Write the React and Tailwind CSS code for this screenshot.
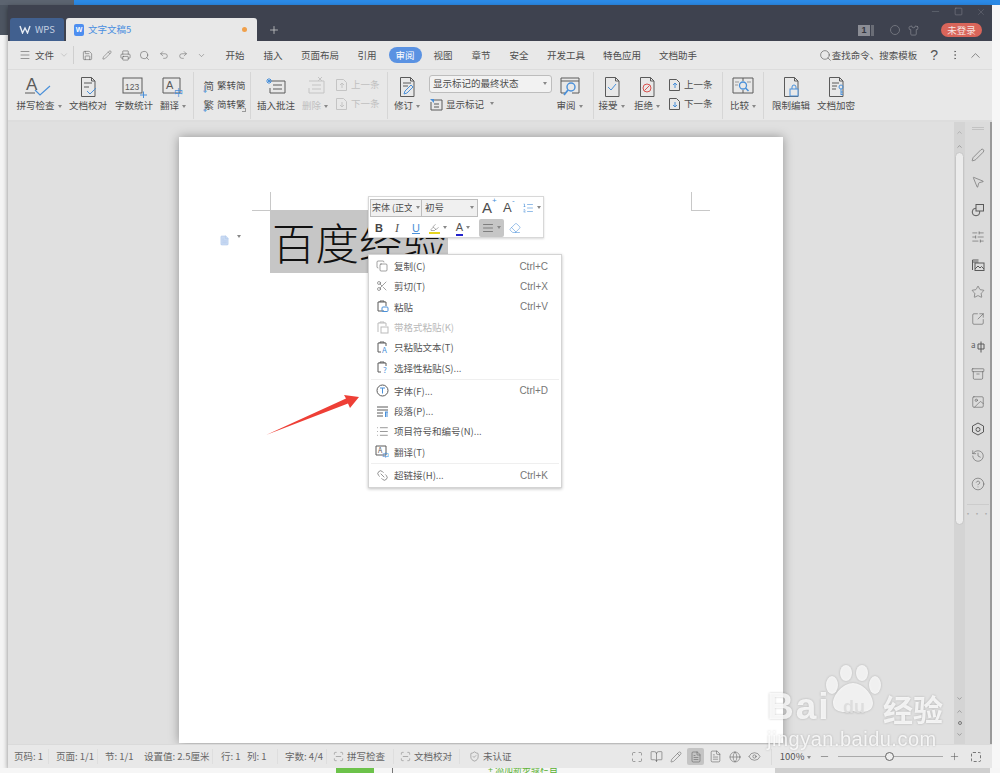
import {
  Menu, ChevronDown, ChevronUp, Save, Printer, Undo2, Redo2, Search, EllipsisVertical, CircleHelp,
  Plus, Minus, X, Square, Shirt, Copy, Scissors, Link2, Star, Pen, MousePointer2, SlidersHorizontal,
  SquareArrowOutUpRight, Archive, Image, History, Pencil, Eye, Globe, BookOpen, ShieldCheck, Maximize, FileText,
  AlignJustify, Eraser, Highlighter, ListOrdered, ScanLine, List,
} from "lucide-react";

const G = "#5a5a5a";
const B = "#4a90d9";

// small caret used by most ribbon items
const Caret = () => <span className="inline-block ml-[3px] mb-[1px] border-x-[2px] border-t-[3px] border-x-transparent border-t-[#888]"></span>;

const DocIcon = ({ children, size = 22, color = G }) => (
  <svg width={size} height={size} viewBox="0 0 22 22" fill="none" stroke={color} strokeWidth="1">
    <path d="M4.5 1.5h10l3.500 3.500v15.500h-13.500z" />
    <path d="M14.500 1.500v3.500h3.500" />
    {children}
  </svg>
);

const CommentIcon = ({ color = G, star }) => (
  <svg width="24" height="22" viewBox="0 0 24 22" fill="none" stroke={color} strokeWidth="1">
    <path d="M6 5h15v12h-15v-5" />
    <path d="M9 9h9M9 13h9" />
    {star && <path d="M5 2v6M2 5h6M3 3l4 4M7 3l-4 4" stroke={B} />}
    {!star && <path d="M15 1l4 4M19 1l-4 4" />}
  </svg>
);

const ribbonIcons = {
  spell: (
    <svg width="30" height="22" viewBox="0 0 30 22" fill="none">
      <text x="2" y="14" fontSize="17" fill={G} fontFamily="Liberation Sans">A</text>
      <path d="M1 17h10" stroke={G} />
      <path d="M11 14l5 5 10-9" stroke={B} strokeWidth="1.200" />
    </svg>
  ),
  proof: <DocIcon><path d="M7 7h8M7 11h5" /><path d="M10 15l3 3 6-6" stroke={B} /></DocIcon>,
  count: (
    <svg width="30" height="22" viewBox="0 0 30 22" fill="none">
      <rect x="4" y="2" width="19" height="15" stroke={G} />
      <text x="6" y="13.500" fontSize="8.500" fill={G} fontFamily="Liberation Sans">123</text>
      <path d="M21 19h7M24.500 15.500v7" stroke={B} />
    </svg>
  ),
  translate: (
    <svg width="28" height="22" viewBox="0 0 28 22" fill="none">
      <path d="M4 2h17v15h-17z" stroke={G} />
      <text x="7" y="13" fontSize="11" fill={G} fontFamily="Liberation Sans">A</text>
      <text x="15" y="20" fontSize="9" fill={B} fontFamily="Noto Sans CJK SC">中</text>
    </svg>
  ),
  comment: <CommentIcon star />,
  del: <CommentIcon color="#c4c4c4" />,
  revise: <DocIcon><path d="M7 7h8M7 10h5" /><path d="M8 18l1-3 6-6 2 2-6 6z" stroke={B} /></DocIcon>,
  review: (
    <svg width="24" height="22" viewBox="0 0 24 22" fill="none">
      <path d="M3 2h18v15h-7M8 17h-5v-15M3 5h18" stroke={G} />
      <circle cx="13" cy="11" r="4" stroke={B} strokeWidth="1.400" />
      <path d="M10 14l-4 5" stroke={B} strokeWidth="1.800" />
    </svg>
  ),
  accept: <DocIcon><path d="M7 11l3 3 5-6" stroke={B} /></DocIcon>,
  reject: <DocIcon><circle cx="11" cy="12" r="4" stroke="#d9534f" /><path d="M8.500 14.500l5-5" stroke="#d9534f" /></DocIcon>,
  compare: (
    <svg width="26" height="22" viewBox="0 0 26 22" fill="none">
      <path d="M3 2h20v15h-20zM13 2v3M13 14v3" stroke={G} />
      <path d="M5 6h4M5 9h3M17 6h4" stroke="#999" />
      <circle cx="13" cy="9.500" r="3.500" stroke={B} strokeWidth="1.300" />
      <path d="M15.500 12l3 3" stroke={B} strokeWidth="1.600" />
    </svg>
  ),
  lock: <DocIcon><rect x="10" y="13" width="8" height="7" fill="#e9e9e9" stroke={B} /><path d="M12 13v-2a2 2 0 0 1 4 0v2" stroke={B} /></DocIcon>,
  key: <DocIcon><path d="M7 7h7M7 10h5M7 13h4" /><circle cx="16" cy="11" r="2" stroke={B} /><path d="M16 13v6M16 16h2M16 18.500h2" stroke={B} /></DocIcon>,
};

const SmallDoc = ({ color = G, up }) => (
  <svg width="13" height="14" viewBox="0 0 13 14" fill="none" stroke={color}>
    <path d="M1.500 1.500h7l3 3v8h-10z" />
    {up ? <path d="M7 10v-5M5 7l2-2 2 2" stroke={color === G ? B : color} /> : <path d="M7 5v5M5 8l2 2 2-2" stroke={color === G ? B : color} />}
  </svg>
);

function Big({ icon, label, caret, w, dim }) {
  return (
    <div className="flex flex-col items-center pt-[5px] shrink-0" style={{ width: w }}>
      <div className="h-[24px] flex items-center justify-center">{ribbonIcons[icon]}</div>
      <div className={`-mt-[1px] text-[9.500px] leading-[14px] whitespace-nowrap ${dim ? "text-[#c0c0c0]" : "text-[#4d4d4d]"}`}>
        {label}{caret && <Caret />}
      </div>
    </div>
  );
}

function Small({ icon, label, dim, caret }) {
  return (
    <div className={`h-[19px] flex items-center gap-[3px] text-[9.500px] whitespace-nowrap ${dim ? "text-[#c0c0c0]" : "text-[#4d4d4d]"}`}>
      {icon}<span>{label}</span>{caret && <Caret />}
    </div>
  );
}

const ConvertIcon = ({ ch }) => (
  <span className="w-[13px] h-[14px] relative text-[10.500px] leading-[14px] text-[#555] text-right">
    {ch}
    <span className="absolute left-0 bottom-0 text-[8px] leading-[8px] text-[#4a90d9]">↓</span>
  </span>
);

const Sep = () => <div className="w-px h-[47px] bg-[#d6d6d6] shrink-0"></div>;

const menus = ["开始", "插入", "页面布局", "引用", "审阅", "视图", "章节", "安全", "开发工具", "特色应用", "文档助手"];

const menuItems = [
  { icon: <Copy size={12} strokeWidth={1.100} />, label: "复制(C)", key: "Ctrl+C" },
  { icon: <Scissors size={12} strokeWidth={1.100} />, label: "剪切(T)", key: "Ctrl+X" },
  { icon: <svg width="13" height="13" viewBox="0 0 13 13" fill="none" stroke={G}><path d="M8 11h-6v-9h8v4" /><path d="M4 2v-1h4v1" /><rect x="6" y="7" width="6" height="4.500" rx="1" stroke={B} /></svg>, label: "粘贴", key: "Ctrl+V" },
  { icon: <svg width="13" height="13" viewBox="0 0 13 13" fill="none" stroke="#bbb"><path d="M2 11v-9h8v3M4 2v-1h4v1" /><rect x="5" y="6" width="7" height="6" /></svg>, label: "带格式粘贴(K)", dim: true },
  { icon: <svg width="13" height="13" viewBox="0 0 13 13" fill="none" stroke={G}><path d="M5 11h-3v-9h8v3M4 2v-1h4v1" /><text x="6" y="12" fontSize="8" fill={B} stroke="none">A</text></svg>, label: "只粘贴文本(T)" },
  { icon: <svg width="13" height="13" viewBox="0 0 13 13" fill="none" stroke={G}><path d="M5 11h-3v-9h8v3M4 2v-1h4v1" /><text x="7" y="12" fontSize="8" fill={B} stroke="none">?</text></svg>, label: "选择性粘贴(S)...", sepAfter: true },
  { icon: <svg width="13" height="13" viewBox="0 0 13 13" fill="none" stroke={G}><circle cx="6.500" cy="6.500" r="5.500" /><path d="M4 4h5M6.500 4v5.500" stroke={B} /></svg>, label: "字体(F)...", key: "Ctrl+D" },
  { icon: <svg width="13" height="13" viewBox="0 0 13 13" fill="none" stroke={G}><path d="M1 2h11M1 5h11M1 8h6M1 11h6" /><path d="M9.500 7v5M11 7v5M9 7h3" stroke={B} /></svg>, label: "段落(P)..." },
  { icon: <List size={13} strokeWidth={1.100} />, label: "项目符号和编号(N)..." },
  { icon: <svg width="14" height="13" viewBox="0 0 14 13" fill="none" stroke={G}><path d="M1 1h10v9h-10z" /><text x="3" y="8" fontSize="7" fill={G} stroke="none">A</text><text x="7" y="13" fontSize="7" fill={B} stroke="none">中</text></svg>, label: "翻译(T)", sepAfter: true },
  { icon: <Link2 size={13} strokeWidth={1.100} className="rotate-45" />, label: "超链接(H)...", key: "Ctrl+K" },
];

const sideIcons = [Pen, MousePointer2, null, SlidersHorizontal, null, Star, SquareArrowOutUpRight, null, Archive, Image, null, History, CircleHelp];
const sideExtras = {
  2: <svg width="14" height="14" viewBox="0 0 14 14" fill="none" stroke={G}><circle cx="5" cy="9" r="3.800" /><rect x="5" y="1.500" width="7.500" height="6.500" fill="#d8d8d8" /></svg>,
  4: <svg width="14" height="14" viewBox="0 0 14 14" fill="none" stroke={G}><path d="M1.500 12v-10h6M1.500 4h6" /><rect x="4" y="5" width="9" height="7.500" /><path d="M4 11l3-3 2 2 1.500-1.500 2.500 2.500" /></svg>,
  7: <svg width="14" height="14" viewBox="0 0 14 14" fill="none" stroke={G}><text x="0" y="8" fontSize="8" fill={G} stroke="none">a</text><path d="M7 4h6v5h-6zM10 1.500v11" /></svg>,
  10: <svg width="14" height="14" viewBox="0 0 14 14" fill="none" stroke={G}><path d="M7 1l5.500 3v6l-5.500 3-5.500-3v-6z" /><circle cx="7" cy="7.500" r="2" /></svg>,
};

const quick = [
  <Save size={11} strokeWidth={1.100} />,
  <Pencil size={10} strokeWidth={1.100} />,
  <Printer size={11} strokeWidth={1.100} />,
  <Search size={11} strokeWidth={1.100} />,
  <Undo2 size={10} strokeWidth={1.100} />,
  <Redo2 size={10} strokeWidth={1.100} />,
  <ChevronDown size={9} strokeWidth={1.100} />,
];

const viewIcons = [
  <Maximize size={12} strokeWidth={1} />,
  <BookOpen size={13} strokeWidth={1} />,
  <Pencil size={12} strokeWidth={1} />,
  <span className="w-[17px] h-[17px] rounded-[2px] bg-[#c4c4c4] flex items-center justify-center"><FileText size={12} strokeWidth={1} /></span>,
  <FileText size={13} strokeWidth={1} />,
  <Globe size={12} strokeWidth={1} />,
  <Eye size={13} strokeWidth={1} />,
];

export default function App() {
  return (
    <div className="w-[1000px] h-[773px] overflow-hidden bg-white flex flex-col font-['Noto_Sans_CJK_SC','Liberation_Sans',sans-serif] text-[#4d4d4d] relative">
      {/* desktop behind the window */}
      <div className="h-[5px] shrink-0 flex">
        <div className="w-[74px] bg-[#5c6470]"></div>
        <div className="flex-1 bg-[#2b8ae6]"></div>
      </div>

      <div className="flex flex-1 min-h-0">
        <div className="w-[8px] shrink-0 flex flex-col">
          <div className="h-[30px] bg-[#4d5561]"></div>
          <div className="flex-1 bg-[#f4f4f4]"></div>
        </div>

        {/* wps window */}
        <div className="w-[984px] h-[763px] flex flex-col shrink-0 shadow-[0_2px_5px_rgba(0,0,0,0.45)]">
          {/* title bar */}
          <div className="h-[36px] shrink-0 bg-[#3e424f] flex items-end relative">
            <div className="ml-[2px] w-[54px] h-[23px] rounded-t-[3px] bg-[#41608f] flex items-center justify-center gap-[4px] text-[9.500px] text-[#c4d0e2]">
              <svg width="12" height="9" viewBox="0 0 12 9" fill="none" stroke="#e6ecf4" strokeWidth="1.400"><path d="M1 1l2.500 7 2.500-5 2.500 5 2.500-7" /></svg>
              WPS
            </div>
            <div className="ml-[2px] w-[191px] h-[23px] rounded-t-[3px] bg-[#e8e8e8] flex items-center pl-[8px] text-[9.500px] text-[#4a8fe0]">
              <span className="w-[10px] h-[12px] rounded-[2px] bg-[#4d8ef0] text-white text-[7px] leading-[12px] text-center font-bold font-['Liberation_Sans',sans-serif] mr-[4px]">W</span>
              文字文稿5
              <span className="ml-auto mr-[10px] w-[5px] h-[5px] rounded-full bg-[#f0a04b]"></span>
            </div>
            <Plus size={12} color="#d0d0d0" strokeWidth={1.500} className="ml-[11px] mb-[5px]" />
            <div className="ml-auto flex items-center mb-[4px] mr-[10px]">
              <span className="w-[12px] h-[11px] bg-[#8b8d95] text-[#33363f] text-[9px] leading-[11px] text-center font-bold font-['Liberation_Sans',sans-serif]">1</span>
              <span className="ml-[1px] w-[3px] h-[11px] bg-[#6a6d76]"></span>
              <span className="ml-[16px] w-[10px] h-[10px] rounded-full border border-[#70737c]"></span>
              <Shirt size={11} color="#9a9ca4" strokeWidth={1.200} className="ml-[8px]" />
              <span className="ml-[22px] w-[41px] h-[14px] rounded-full bg-[#d9655a] text-[9.500px] leading-[14px] text-center text-[#f7e5e2]">未登录</span>
            </div>
            <div className="absolute right-[6px] top-[1px] flex items-center gap-[13px]">
              <Minus size={11} color="#7c7f88" strokeWidth={1} />
              <Square size={9} color="#a0a2aa" strokeWidth={1} />
              <X size={10} color="#7c7f88" strokeWidth={1} />
            </div>
          </div>

          {/* menu bar */}
          <div className="h-[29px] shrink-0 bg-[#e8e8e8] border-b border-[#dcdcdc] flex items-center text-[9.500px]">
            <Menu size={12} strokeWidth={1.100} className="ml-[11px]" />
            <span className="ml-[4px]">文件</span>
            <ChevronDown size={10} color="#999" strokeWidth={1} className="ml-[5px]" />
            <div className="ml-[4px] w-px h-[18px] bg-[#cfcfcf]"></div>
            <div className="flex items-center ml-[4px] w-[138px]">
              {quick.map((q, i) => (
                <span key={i} className="w-[19px] flex justify-center">{q}</span>
              ))}
            </div>
            <div className="flex items-center">
              {menus.map((m) => (
                <div key={m} className={`h-[16px] flex justify-center ${m.length > 2 ? "w-[56px]" : "w-[38px]"}`}>
                  <span className={`h-[16px] leading-[16px] ${m === "审阅" ? "px-[7px] bg-[#5a92e2] text-white rounded-full" : ""}`}>{m}</span>
                </div>
              ))}
            </div>
            <div className="ml-auto flex items-center">
              <Search size={13} strokeWidth={1.100} />
              <span>查找命令、搜索模板</span>
              <span className="ml-[13px] text-[14px] text-[#555] font-['Liberation_Sans',sans-serif]">?</span>
              <EllipsisVertical size={12} strokeWidth={1.100} className="ml-[11px]" />
              <ChevronUp size={15} strokeWidth={1} className="ml-[7px] mr-[9px]" />
            </div>
          </div>

          {/* ribbon */}
          <div className="h-[52px] shrink-0 bg-[#e8e8e8] border-b-2 border-[#dddddd] flex items-center">
            <div className="flex w-[185px] pl-[7px] h-full shrink-0">
              <Big icon="spell" label="拼写检查" caret w={48} />
              <Big icon="proof" label="文档校对" w={50} />
              <Big icon="count" label="字数统计" w={42} />
              <Big icon="translate" label="翻译" caret w={36} />
            </div>
            <Sep />
            <div className="w-[56px] shrink-0 flex flex-col justify-center pl-[7px] relative">
              <Small icon={<ConvertIcon ch="简" />} label="繁转简" />
              <Small icon={<ConvertIcon ch="繁" />} label="简转繁" />
              <span className="absolute right-[4px] bottom-[2px] w-[4px] h-[4px] border-r border-b border-[#999]"></span>
            </div>
            <Sep />
            <div className="w-[136px] shrink-0 flex h-full pl-[3px]">
              <Big icon="comment" label="插入批注" w={44} />
              <Big icon="del" label="删除" caret dim w={34} />
              <div className="flex flex-col justify-center ml-[3px] -mt-[2px]">
                <Small icon={<SmallDoc color="#c4c4c4" up />} label="上一条" dim />
                <Small icon={<SmallDoc color="#c4c4c4" />} label="下一条" dim />
              </div>
            </div>
            <Sep />
            <div className="w-[205px] shrink-0 flex h-full pl-[4px]">
              <Big icon="revise" label="修订" caret w={30} />
              <div className="ml-[7px] w-[123px] flex flex-col justify-center gap-[2px] -mt-[2px]">
                <div className="h-[18px] rounded-[3px] border border-[#bdbdbd] bg-[#f2f2f2] flex items-center justify-between pl-[3px] pr-[4px] text-[9.500px]">显示标记的最终状态<Caret /></div>
                <Small icon={<svg width="14" height="13" viewBox="0 0 14 13" fill="none" stroke={G}><path d="M2 4v8h11v-10h-9M5 6h5M5 9h5" /><path d="M1 1h4v4z" fill={B} stroke="none" /></svg>} label="显示标记" caret />
              </div>
              <Big icon="review" label="审阅" caret w={35} />
            </div>
            <Sep />
            <div className="w-[128px] shrink-0 flex h-full">
              <Big icon="accept" label="接受" caret w={35} />
              <Big icon="reject" label="拒绝" caret w={36} />
              <div className="flex flex-col justify-center ml-[3px] -mt-[2px]">
                <Small icon={<SmallDoc up />} label="上一条" />
                <Small icon={<SmallDoc />} label="下一条" />
              </div>
            </div>
            <Sep />
            <div className="w-[40px] shrink-0 flex h-full"><Big icon="compare" label="比较" caret w={40} /></div>
            <Sep />
            <div className="flex h-full pl-[4px]">
              <Big icon="lock" label="限制编辑" w={46} />
              <Big icon="key" label="文档加密" w={44} />
            </div>
          </div>

          {/* workspace */}
          <div className="flex-1 min-h-0 flex bg-[#e0e0e0]">
            <div className="flex-1 flex justify-center pt-[15px] overflow-hidden">
              <div className="w-[604px] h-[606px] bg-white shadow-[0_0_10px_rgba(0,0,0,0.35)] relative pt-[73px] pl-[91px] flex">
                <div className="absolute left-[91px] top-[55px] w-px h-[18px] bg-[#c8c8c8]"></div>
                <div className="absolute left-[73px] top-[73px] w-[18px] h-px bg-[#c8c8c8]"></div>
                <div className="absolute left-[512px] top-[55px] w-px h-[19px] bg-[#c8c8c8]"></div>
                <div className="absolute left-[512px] top-[73px] w-[19px] h-px bg-[#c8c8c8]"></div>
                <FileText size={11} color="#a9c3ea" fill="#c9daf3" strokeWidth={1} className="absolute left-[40px] top-[98px]" />
                <span className="absolute left-[55px] top-[98px] leading-[10px] flex"><Caret /></span>
                <div className="h-[63px] bg-[#c6c6c6] text-[43.500px] leading-[63px] px-[2px] text-[#111] font-extralight">百度经验</div>
              </div>
            </div>

            {/* scrollbar */}
            <div className="w-[11px] shrink-0 bg-[#d4d4d4] flex flex-col items-center">
              <ChevronUp size={7} className="mt-[7px]" color="#999" />
              <ChevronUp size={7} className="mt-[7px]" color="#777" />
              <div className="mt-[2px] w-[9px] h-[373px] rounded-full bg-[#ececec] border border-[#c6c6c6]"></div>
              <div className="mt-auto mb-[6px] flex flex-col items-center gap-[6px] text-[#777]">
                <ChevronDown size={7} />
                <ChevronUp size={7} />
                <span className="w-[4px] h-[4px] rounded-full border border-[#777]"></span>
                <ChevronDown size={7} />
              </div>
            </div>

            {/* side panel */}
            <div className="w-[27px] shrink-0 bg-[#dbdbdb] flex flex-col items-center pt-[5px] border-r-2 border-[#9a9a9a]">
              <div className="w-[12px] h-[3px] border-y border-[#c2c2c2]"></div>
              <div className="mt-[18px] flex flex-col items-center gap-[13.400px]">
                {sideIcons.map((Icon, i) => (
                  <div key={i} className="h-[14px] flex items-center justify-center">
                    {Icon ? <Icon size={14} strokeWidth={1} color={G} /> : sideExtras[i]}
                  </div>
                ))}
              </div>
              <div className="mt-[13px] w-[22px] h-px bg-[#cccccc]"></div>
              <div className="mt-[6px] text-[8px] leading-[6px] tracking-[1px] text-[#aaa]">•••</div>
            </div>
          </div>

          {/* status bar */}
          <div className="h-[24px] shrink-0 bg-[#e8e8e8] border-t border-[#dadada] flex items-center text-[9.500px] text-[#666]">
            <span className="pl-[6px] w-[40px]">页码: 1</span>
            <span className="w-[49px] pl-[7px] border-l border-[#dedede]">页面: 1/1</span>
            <span className="w-[47px] pl-[7px] border-l border-[#dedede]">节: 1/1</span>
            <span className="w-[68px] whitespace-nowrap">设置值: 2.5厘米</span>
            <span className="w-[65px] pl-[8px] border-l border-[#dedede] whitespace-nowrap">行: 1 &nbsp;&nbsp;列: 1</span>
            <span className="w-[49px] pl-[7px] border-l border-[#dedede] whitespace-nowrap">字数: 4/4</span>
            <span className="w-[67px] pl-[6px] border-l border-[#dedede] flex items-center gap-[3px] whitespace-nowrap"><ScanLine size={11} strokeWidth={1} />拼写检查</span>
            <span className="w-[66px] pl-[6px] border-l border-[#dedede] flex items-center gap-[3px] whitespace-nowrap"><ScanLine size={11} strokeWidth={1} />文档校对</span>
            <span className="pl-[9px] border-l border-[#dedede] flex items-center gap-[3px] whitespace-nowrap"><ShieldCheck size={11} strokeWidth={1} />未认证</span>
            <div className="ml-auto w-[365px] flex items-center text-[#555]">
              {viewIcons.map((v, i) => (
                <span key={i} className="w-[19.700px] flex justify-center">{v}</span>
              ))}
              <span className="ml-[6px] w-px h-[16px] bg-[#dadada]"></span>
              <span className="ml-[8px] w-[36px] whitespace-nowrap">100%<Caret /></span>
              <span className="w-[18px] flex justify-center"><Minus size={11} strokeWidth={1.200} /></span>
              <div className="ml-[4px] w-[105px] h-px bg-[#aaa] relative">
                <span className="absolute left-[47px] -top-[4px] w-[9px] h-[9px] rounded-full bg-[#eee] border border-[#666]"></span>
              </div>
              <span className="ml-[3px] w-[18px] flex justify-center"><Plus size={11} strokeWidth={1.200} /></span>
              <span className="ml-[7px] w-[10px] h-[10px] rounded-[2px] border border-dashed border-[#777]"></span>
            </div>
          </div>
        </div>

        <div className="flex-1 bg-[#f7f7f7]"></div>
      </div>

      {/* strip of the page behind the window */}
      <div className="h-[5px] shrink-0 flex bg-[#f6f6f6] relative text-[9px] leading-[5px] text-[#58b030] overflow-hidden">
        <span className="ml-[336px] w-[38px] bg-[#6cc24a]"></span>
        <span className="ml-[18px] w-px bg-[#777]"></span>
        <span className="ml-[95px] leading-[3px] whitespace-nowrap">+ 添加新步骤栏目</span>
        <span className="ml-auto mr-[10px] w-[215px] bg-[#cfcfcf]"></span>
      </div>

      {/* floating format toolbar */}
      <div className="absolute left-[368px] top-[196px] w-[176px] h-[42px] bg-white border border-[#d8d8d8] shadow-[0_1px_2px_rgba(0,0,0,0.15)] p-[1px] text-[9.500px]">
        <div className="flex items-center h-[19px]">
          <div className="w-[52px] h-[18px] bg-[#f0f0f0] border border-[#bdbdbd] flex items-center justify-between pl-[1px] pr-[1px] whitespace-nowrap overflow-hidden text-[9px]"><span className="w-[40px] overflow-hidden">宋体 (正文</span><Caret /></div>
          <div className="w-[56px] h-[18px] bg-[#f0f0f0] border border-l-0 border-[#bdbdbd] flex items-center pl-[3px] justify-between pr-[3px]">初号<Caret /></div>
          <span className="ml-[4px] w-[18px] text-[15px] leading-[18px] font-['Liberation_Sans',sans-serif] relative">A<span className="absolute left-[10px] -top-[2px] text-[8px] leading-[8px] text-[#4a90d9]">+</span></span>
          <span className="ml-[3px] w-[16px] text-[13px] leading-[18px] font-['Liberation_Sans',sans-serif] relative">A<span className="absolute left-[9px] -top-[2px] text-[8px] leading-[8px] text-[#4a90d9]">-</span></span>
          <ListOrdered size={12} color={B} strokeWidth={1.200} className="ml-[3px]" /><Caret />
        </div>
        <div className="flex items-center h-[20px] mt-[1px] font-['Liberation_Sans',sans-serif]">
          <span className="w-[18px] text-center text-[11px] font-bold text-[#444]">B</span>
          <span className="w-[18px] text-center text-[12px] italic font-['Liberation_Serif',serif] text-[#555]">I</span>
          <span className="w-[20px] text-center text-[11px] underline text-[#4a90d9]">U</span>
          <span className="w-[24px] flex items-center justify-center"><Highlighter size={11} strokeWidth={1.200} className="border-b-2 border-[#e6d51f]" /><Caret /></span>
          <span className="w-[26px] flex items-center justify-center text-[11px] leading-[13px]"><span className="text-[#555] border-b-2 border-[#2222cc]">A</span><Caret /></span>
          <span className="ml-[3px] w-[25px] h-[18px] rounded-[2px] bg-[#c6c6c6] flex items-center justify-center"><AlignJustify size={12} strokeWidth={1.200} /><Caret /></span>
          <span className="w-[22px] flex justify-center"><Eraser size={12} color={B} strokeWidth={1.100} /></span>
        </div>
      </div>

      {/* context menu */}
      <div className="absolute left-[368px] top-[254px] w-[194px] h-[234px] bg-white border border-[#d4d4d4] shadow-[0_1px_3px_rgba(0,0,0,0.25)] pt-[1px] text-[9.500px]">
        {menuItems.map((it) => (
          <div key={it.label}>
            <div className={`h-[20.300px] flex items-center pl-[6px] pr-[13px] ${it.dim ? "text-[#b8b8b8]" : "text-[#555]"}`}>
              <span className="w-[14px] flex justify-center">{it.icon}</span>
              <span className="ml-[5px]">{it.label}</span>
              {it.key && <span className="ml-auto text-[#777] font-['Liberation_Sans',sans-serif] text-[10px]">{it.key}</span>}
            </div>
            {it.sepAfter && <div className="h-px mx-[2px] my-[1px] bg-[#efefef]"></div>}
          </div>
        ))}
      </div>

      {/* red arrow from the annotation */}
      <svg className="absolute left-[262px] top-[390px]" width="100" height="50" viewBox="0 0 100 50">
        <path d="M4 45L84 8.500L82 5L97 7L88 18L86 13.500z" fill="#ee3f36" />
      </svg>

      {/* watermark */}
      <div className="absolute left-[767px] top-[665px] w-[185px] h-[88px] text-white/80 pointer-events-none [filter:drop-shadow(0_0_1px_rgba(0,0,0,0.25))]">
        <svg className="absolute left-[55px] top-0" width="62" height="52" viewBox="0 0 62 52" fill="currentColor">
          <ellipse cx="10" cy="20" rx="6" ry="9" />
          <ellipse cx="24" cy="8" rx="6" ry="8" />
          <ellipse cx="40" cy="8" rx="6" ry="8" />
          <ellipse cx="53" cy="20" rx="6" ry="9" />
          <path d="M31 18c10 0 20 12 20 20 0 10-12 10-20 8-8 2-20 2-20-8 0-8 10-20 20-20z" />
        </svg>
        <span className="absolute left-0 top-[20px] text-[37px] font-bold tracking-[2px] leading-[44px] font-['Liberation_Sans',sans-serif]">Bai</span>
        <span className="absolute left-[76px] top-[30px] text-[18px] font-bold leading-[24px] text-[#dddddd] font-['Liberation_Sans',sans-serif]">du</span>
        <span className="absolute left-[116px] top-[24px] text-[30px] font-bold leading-[38px] whitespace-nowrap">经验</span>
        <span className="absolute left-0 top-[62px] text-[20px] tracking-[0.500px] leading-[24px] whitespace-nowrap font-['Liberation_Sans',sans-serif]">jingyan.baidu.com</span>
      </div>
    </div>
  );
}
